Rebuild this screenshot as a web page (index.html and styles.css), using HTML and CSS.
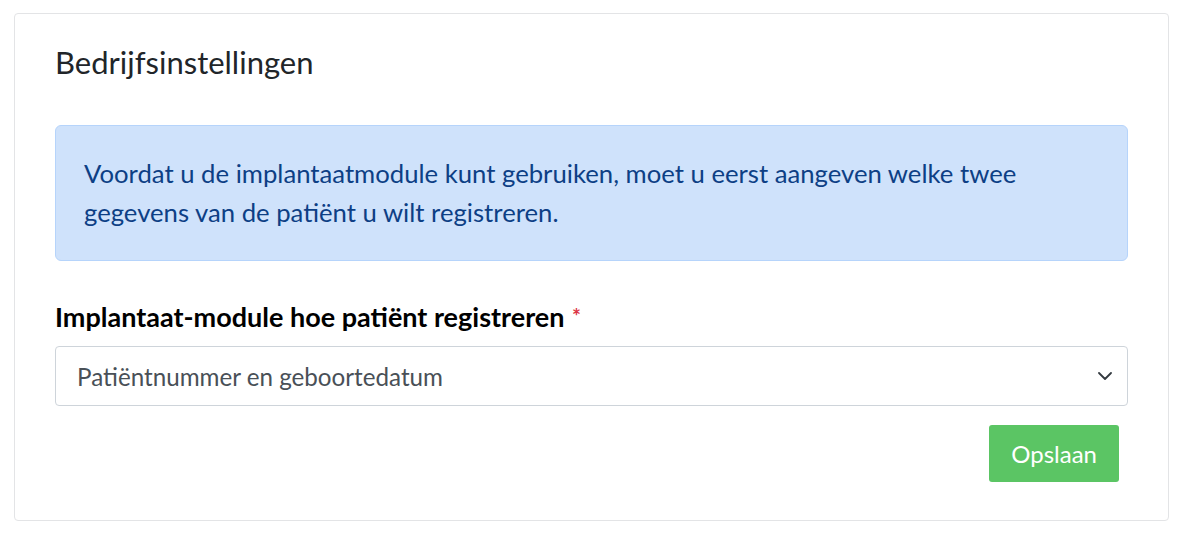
FILE: index.html
```html
<!DOCTYPE html>
<html lang="nl">
<head>
<meta charset="utf-8">
<link rel="stylesheet" href="styles.css">
</head>
<body>
<div class="card">
  <h1 class="title">Bedrijfsinstellingen</h1>
  <div class="alert">Voordat u de implantaatmodule kunt gebruiken, moet u eerst aangeven welke twee gegevens van de patiënt u wilt registreren.</div>
  <label class="label">Implantaat-module hoe patiënt registreren <span class="req">*</span></label>
  <div class="select">
    <span class="select-text">Patiëntnummer en geboortedatum</span>
    <svg class="chev" width="14" height="8" viewBox="0 0 14 8"><path d="M1 1l6 6 6-6" fill="none" stroke="#343a40" stroke-width="1.8" stroke-linecap="round" stroke-linejoin="round"/></svg>
  </div>
  <div class="actions">
    <button class="btn">Opslaan</button>
  </div>
</div>
</body>
</html>
```
FILE: styles.css
```css
* { box-sizing: border-box; }
html, body { margin: 0; background: #fff; }
body {
  padding: 13px 23px 25px 14px;
  font-family: Lato, "Noto Sans", sans-serif;
  color: #212529;
}
.card {
  border: 1.5px solid #e3e4e6;
  border-radius: 4px;
  padding: 30px 40px 38px 40px;
  display: flex;
  flex-direction: column;
}
.title {
  margin: 0;
  font-weight: 400;
  font-size: 31px;
  line-height: 36px;
  color: #212529;
}
.alert {
  margin-top: 45px;
  background: #cfe2fb;
  border: 1.5px solid #b6d4fb;
  border-radius: 6px;
  color: #0d3f85;
  font-size: 25.7px;
  line-height: 39px;
  padding: 28px 100px 28px 28px;
}
.label {
  margin-top: 40px;
  height: 32px;
  font-weight: 700;
  font-size: 27px;
  line-height: 32px;
  color: #000;
}
.req { color: #dc3545; font-size: 21px; font-weight: 700; line-height: 0; position: relative; top: -3px; margin-left: 1px; }
.select {
  margin-top: 13px;
  height: 60px;
  border: 1.5px solid #ced4da;
  border-radius: 4px;
  display: flex;
  align-items: center;
  justify-content: space-between;
  padding: 0 15px 0 21px;
  font-size: 24.2px;
  color: #495057;
}
.actions {
  display: flex;
  justify-content: flex-end;
  margin-top: 19px;
  padding-right: 9px;
}
.btn {
  font-family: inherit;
  background: #5bc564;
  color: #fff;
  border: 0;
  border-radius: 3px;
  font-size: 24px;
  height: 57px;
  padding: 0 22px;
}
```
